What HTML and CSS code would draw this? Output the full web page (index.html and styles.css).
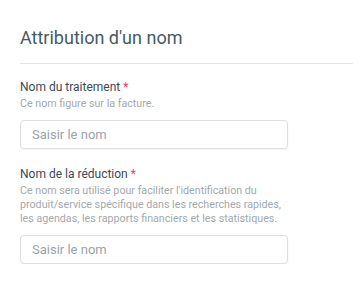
FILE: index.html
```html
<!DOCTYPE html>
<html lang="fr">
<head>
    <meta charset="UTF-8">
    <title>Attribution d'un nom</title>
    <link rel="stylesheet" href="styles.css">
</head>
<body>
    <section class="naming">
        <h2 class="naming-title">Attribution d'un nom</h2>

        <div class="naming-fields">
            <div class="field">
                <label class="field-label" for="treatmentName">Nom du traitement <span class="required">*</span></label>
                <p class="field-hint">Ce nom figure sur la facture.</p>
                <input class="field-input" id="treatmentName" type="text" placeholder="Saisir le nom">
            </div>

            <div class="field">
                <label class="field-label" for="discountName">Nom de la réduction <span class="required">*</span></label>
                <p class="field-hint">Ce nom sera utilisé pour faciliter l'identification du produit/service spécifique dans les recherches rapides, les agendas, les rapports financiers et les statistiques.</p>
                <input class="field-input" id="discountName" type="text" placeholder="Saisir le nom">
            </div>
        </div>
    </section>
</body>
</html>
```

FILE: styles.css
```css
* {
    margin: 0;
    padding: 0;
    box-sizing: border-box;
}

body {
    font-family: Roboto, "Liberation Sans", sans-serif;
    background: #fff;
    color: #37474f;
}

.naming {
    padding: 26px 0 0 20px;
}

.naming-title {
    font-size: 18px;
    font-weight: 400;
    line-height: 24px;
    color: #455a64;
    padding-bottom: 13px;
    border-bottom: 1px solid #e2e4e6;
}

.naming-fields {
    width: 268px;
    display: flex;
    flex-direction: column;
    gap: 17px;
    padding-top: 15px;
}

.field {
    display: flex;
    flex-direction: column;
}

.field-label {
    font-size: 12px;
    line-height: 16px;
    color: #3c4a55;
}

.required {
    color: #f0396b;
}

.field-hint {
    font-size: 10.7px;
    line-height: 14px;
    color: #a2a9ae;
    margin-top: 2px;
}

.field-input {
    margin-top: 9px;
    height: 29px;
    width: 100%;
    border: 1px solid #dcdfe2;
    border-radius: 4px;
    padding: 0 11px;
    font-family: inherit;
    font-size: 13px;
    color: #37474f;
    box-shadow: 0 1px 2px rgba(0, 0, 0, 0.06);
    outline: none;
}

.field-input::placeholder {
    color: #9aa3a9;
}
```
